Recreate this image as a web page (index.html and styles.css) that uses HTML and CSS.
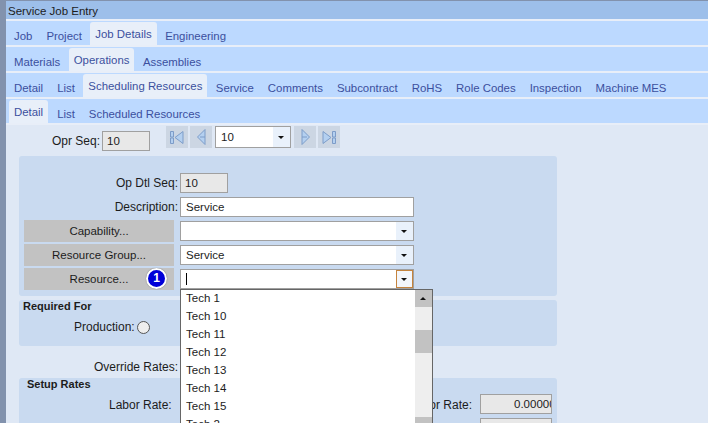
FILE: index.html
```html
<!DOCTYPE html>
<html>
  <head>
    <title>Service Job Entry</title>
    <link rel="stylesheet" href="styles.css">
  </head>
  <body>
    <div class="window">
      <div class="titlebar">Service Job Entry</div>
      <div class="tabs">
        <span class="tab">Job</span><span class="tab">Project</span><span class="tab active">Job Details</span><span class="tab">Engineering</span>
      </div>
      <div class="tabs">
        <span class="tab">Materials</span><span class="tab active">Operations</span><span class="tab">Assemblies</span>
      </div>
      <div class="tabs">
        <span class="tab">Detail</span><span class="tab">List</span><span class="tab active">Scheduling Resources</span><span class="tab">Service</span><span class="tab">Comments</span><span class="tab">Subcontract</span><span class="tab">RoHS</span><span class="tab">Role Codes</span><span class="tab">Inspection</span><span class="tab">Machine MES</span>
      </div>
      <div class="tabs">
        <span class="tab active first">Detail</span><span class="tab">List</span><span class="tab">Scheduled Resources</span>
      </div>

      <div class="content">
        <div class="seqrow">
          <span class="seqlabel">Opr Seq:</span>
          <span class="field readonly seqfield">10</span>
          <div class="navgroup">
            <span class="navbtn"><svg width="14" height="13" viewBox="0 0 14 13"><path d="M.5.500h3v5.500h-3zM.5 7h3v5.500h-3zM13 .5 5 6.500l8 6z" fill="#b4d0f0" stroke="#7d9cc8"/></svg></span>
            <span class="navbtn"><svg width="9" height="16" viewBox="0 0 9 16"><path d="M8 .5.500 8 8 15.500z" fill="#b4d0f0" stroke="#7d9cc8"/><path d="M3 8h5" stroke="#7d9cc8"/></svg></span>
            <span class="combo navcombo"><span class="value">10</span><span class="arrow"></span></span>
            <span class="navbtn"><svg width="9" height="16" viewBox="0 0 9 16"><path d="M1 .5 8.500 8 1 15.500z" fill="#b4d0f0" stroke="#7d9cc8"/><path d="M1 8h5" stroke="#7d9cc8"/></svg></span>
            <span class="navbtn"><svg width="14" height="13" viewBox="0 0 14 13"><path d="M10.500.500h3v5.500h-3zM10.500 7h3v5.500h-3zM1 .5l8 6-8 6z" fill="#b4d0f0" stroke="#7d9cc8"/></svg></span>
          </div>
        </div>

        <div class="panel mainpanel">
          <div class="row">
            <span class="label">Op Dtl Seq:</span>
            <span class="field readonly dtlfield">10</span>
          </div>
          <div class="row">
            <span class="label">Description:</span>
            <span class="field wide">Service</span>
          </div>
          <div class="row">
            <span class="greybtn">Capability...</span>
            <span class="combo wide"><span class="value"></span><span class="arrow"></span></span>
          </div>
          <div class="row">
            <span class="greybtn">Resource Group...</span>
            <span class="combo wide"><span class="value">Service</span><span class="arrow"></span></span>
          </div>
          <div class="row">
            <span class="greybtn">Resource...</span>
            <span class="badge">1</span>
            <span class="combo wide"><span class="value"><span class="caret"></span></span><span class="arrow focused"></span></span>
          </div>
        </div>

        <div class="panel reqpanel">
          <div class="paneltitle">Required For</div>
          <div class="radiorow">Production:<span class="radio"></span></div>
        </div>

        <div class="overriderow">Override Rates:</div>

        <div class="panel ratepanel">
          <div class="paneltitle setup">Setup Rates</div>
          <div class="raterow">
            <span class="laborlabel">Labor Rate:</span>
            <span class="burdenlabel">Labor Rate:</span>
            <span class="field readonly ratefield">0.00000</span>
          </div>
          <div class="raterow lower">
            <span class="field readonly ratefield"></span>
          </div>
        </div>

        <div class="droplist">
          <div class="items">
            <div>Tech 1</div>
            <div>Tech 10</div>
            <div>Tech 11</div>
            <div>Tech 12</div>
            <div>Tech 13</div>
            <div>Tech 14</div>
            <div>Tech 15</div>
            <div>Tech 2</div>
          </div>
          <div class="scrollbar">
            <span class="scrollup"></span>
            <span class="thumb"></span>
            <span class="scrolldown"></span>
          </div>
        </div>
      </div>
    </div>
  </body>
</html>
```

FILE: styles.css
```css
html, body {
  margin: 0;
  height: 423px;
  overflow: hidden;
}
body {
  background-color: #8292ad;
  font-family: "Liberation Sans", Arial, sans-serif;
  font-size: 12px;
  color: #1c1c1c;
  padding-top: 1px;
  box-sizing: border-box;
}
.window {
  margin-left: 6px;
  background-color: #e8eef8;
  height: 422px;
  overflow: hidden;
}
.titlebar {
  height: 18px;
  line-height: 20px;
  padding-left: 2px;
  background-color: #9dbfea;
  margin-bottom: 2px;
  font-size: 11.500px;
}
.tabs {
  display: flex;
  align-items: flex-end;
  height: 24px;
  padding-left: 1px;
  margin-bottom: 2px;
  background-color: #bcd9ff;
  font-size: 11.400px;
}
.tab {
  height: 24px;
  line-height: 31px;
  padding: 0 7px;
  color: #3b4f9e;
  white-space: nowrap;
}
.tab.active {
  height: 23px;
  line-height: 25px;
  padding: 0 5px;
  margin: 0 1.500px;
  background-color: #e8eff9;
  border-radius: 3px 3px 0 0;
}
.tab.active.first {
  margin: 0 2px 0 2px;
}
.content {
  position: relative;
  height: 298px;
  background-color: #dfe8f5;
  padding: 1px 13px 0;
}
.seqrow {
  display: flex;
  align-items: flex-start;
  height: 26px;
}
.seqlabel {
  margin: 5px 2px 0 33px;
  line-height: 20px;
}
.field {
  display: block;
  box-sizing: border-box;
  height: 20px;
  line-height: 18px;
  padding-left: 5px;
  background-color: #ffffff;
  border: 1px solid #a0a0a0;
  font-size: 11.500px;
}
.field.readonly {
  background-color: #e8e8e8;
}
.seqfield {
  width: 48px;
  margin-top: 5px;
  padding-left: 4px;
}
.navgroup {
  display: flex;
  align-items: center;
  gap: 2px;
  margin-left: 16px;
}
.navbtn {
  display: flex;
  align-items: center;
  justify-content: center;
  width: 22px;
  height: 22px;
  background-color: #ccd6e3;
}
.combo {
  display: flex;
  box-sizing: border-box;
  height: 20px;
  background-color: #ffffff;
  border: 1px solid #a0a0a0;
  font-size: 11.500px;
}
.navcombo {
  width: 76px;
  height: 22px;
  margin: 0 1px;
}
.value {
  flex: 1;
  line-height: 18px;
  padding-left: 5px;
}
.navcombo .value {
  line-height: 20px;
}
.arrow {
  position: relative;
  width: 17px;
  background-color: #e9f1fb;
}
.arrow::after {
  content: "";
  position: absolute;
  left: 5px;
  top: 50%;
  margin-top: -1px;
  border-style: solid;
  border-width: 3px 3px 0;
  border-color: #111111 transparent transparent;
}
.arrow.focused {
  box-sizing: border-box;
  border: 1px solid #c5843e;
  background-color: #f3f6fb;
}
.arrow.focused::after {
  left: 4px;
}
.caret {
  display: inline-block;
  width: 1px;
  height: 12px;
  margin-top: 3px;
  background-color: #000000;
}
.panel {
  background-color: #c9daf0;
  border-radius: 3px;
  width: 538px;
}
.mainpanel {
  box-sizing: border-box;
  height: 140px;
  margin-top: 4px;
  padding: 17px 0 0 5px;
  display: flex;
  flex-direction: column;
  gap: 4px;
}
.row {
  position: relative;
  display: flex;
  align-items: center;
  justify-content: flex-end;
  width: 390px;
  height: 20px;
}
.label {
  margin-right: 2px;
}
.dtlfield {
  width: 48px;
  margin-right: 186px;
  padding-left: 4px;
}
.wide {
  width: 234px;
}
.greybtn {
  width: 150px;
  height: 22px;
  line-height: 23px;
  margin-right: 6px;
  text-align: center;
  background-color: #c2c2c2;
  font-size: 11.500px;
}
.badge {
  position: absolute;
  left: 122px;
  top: -1px;
  box-sizing: border-box;
  width: 21px;
  height: 21px;
  line-height: 17px;
  border: 2px solid #ffffff;
  border-radius: 50%;
  background-color: #0000d8;
  box-shadow: 0 0 1px #555555;
  color: #ffffff;
  font-weight: bold;
  font-size: 12px;
  text-align: center;
}
.reqpanel {
  height: 46px;
  margin-top: 4px;
}
.paneltitle {
  font-weight: bold;
  font-size: 11px;
  padding: 0 0 0 4px;
  line-height: 13px;
}
.radiorow {
  display: flex;
  align-items: center;
  gap: 2px;
  margin-left: 55px;
  margin-top: 7px;
}
.radio {
  display: block;
  box-sizing: border-box;
  width: 13px;
  height: 13px;
  border: 1px solid #555555;
  border-radius: 50%;
  background-color: #eeeeee;
}
.overriderow {
  height: 32px;
  line-height: 42px;
  margin-left: 75px;
}
.ratepanel {
  height: 60px;
}
.setup {
  padding: 0 0 0 8px;
  line-height: 13px;
}
.raterow {
  position: relative;
  display: flex;
  align-items: center;
  height: 20px;
  margin-top: 3px;
}
.raterow.lower {
  margin-top: 4px;
}
.laborlabel {
  margin-left: 90px;
  padding-top: 2px;
}
.burdenlabel {
  margin-left: auto;
  margin-right: 8px;
  padding-top: 2px;
}
.ratefield {
  width: 72px;
  margin-right: 5px;
  overflow: hidden;
  padding: 0 0 0 33px;
  margin-left: auto;
  white-space: nowrap;
}
.burdenlabel + .ratefield {
  margin-left: 0;
}
.droplist {
  position: absolute;
  left: 174px;
  top: 164px;
  display: flex;
  box-sizing: border-box;
  width: 253px;
  height: 160px;
  background-color: #ffffff;
  border: 1px solid #666666;
  border-bottom: 0;
  font-size: 11.500px;
}
.items {
  flex: 1;
  padding-left: 5px;
  margin-top: -1px;
}
.items div {
  height: 18px;
  line-height: 18px;
}
.scrollbar {
  position: relative;
  width: 17px;
  background-color: #eeeeee;
}
.scrollup {
  position: absolute;
  top: 0;
  left: 0;
  width: 17px;
  height: 17px;
  background-color: #c2c2c2;
}
.scrollup::after {
  content: "";
  position: absolute;
  left: 5px;
  top: 7px;
  border-style: solid;
  border-width: 0 3px 3px;
  border-color: transparent transparent #111111;
}
.thumb {
  position: absolute;
  top: 40px;
  left: 0;
  width: 17px;
  height: 23px;
  background-color: #c2c2c2;
}
.scrolldown {
  position: absolute;
  top: 127px;
  left: 0;
  width: 17px;
  height: 20px;
  background-color: #c2c2c2;
}
```
